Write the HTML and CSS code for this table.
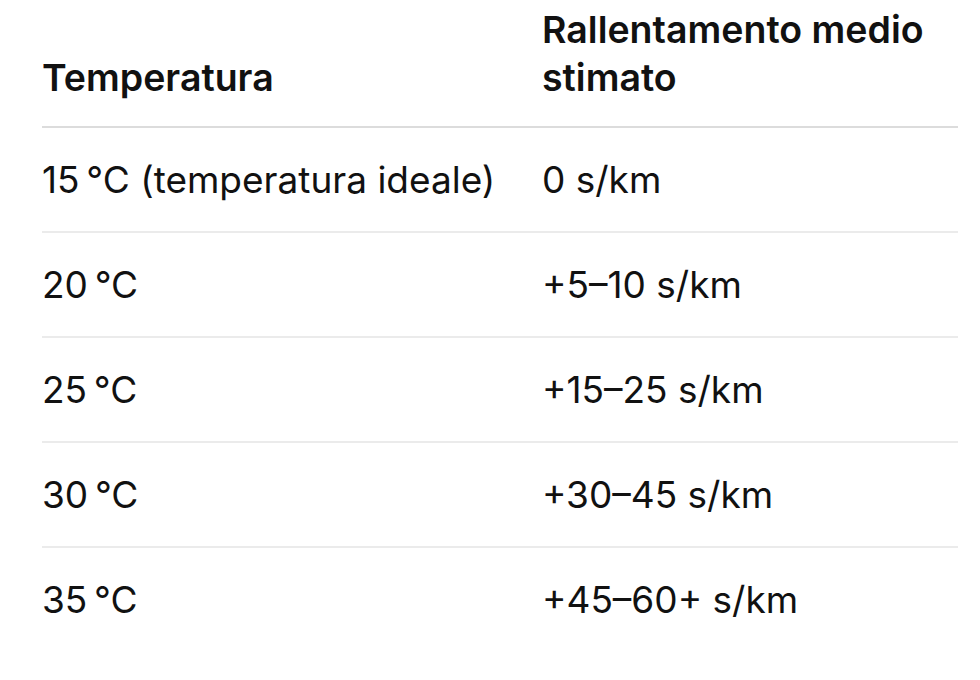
FILE: index.html
```html
<!DOCTYPE html>
<html lang="it">
<head>
<meta charset="utf-8">
<link rel="stylesheet" href="styles.css">
</head>
<body>
<div class="page">
<table class="tbl">
  <thead>
    <tr>
      <th class="c1">Temperatura</th>
      <th class="c2">Rallentamento medio stimato</th>
    </tr>
  </thead>
  <tbody>
    <tr><td>15&#8239;°C (temperatura ideale)</td><td>0 s/km</td></tr>
    <tr><td>20&#8239;°C</td><td>+5–10 s/km</td></tr>
    <tr><td>25&#8239;°C</td><td>+15–25 s/km</td></tr>
    <tr><td>30&#8239;°C</td><td>+30–45 s/km</td></tr>
    <tr><td>35&#8239;°C</td><td>+45–60+ s/km</td></tr>
  </tbody>
</table>
</div>
</body>
</html>
```
FILE: styles.css
```css
html, body {
  margin: 0;
  padding: 0;
  background: #ffffff;
}
.page {
  padding: 6px 22px 0 42px;
}
.tbl {
  width: 916px;
  border-collapse: collapse;
  font-family: Inter, "Liberation Sans", sans-serif;
  color: #111111;
  font-size: 37px;
}
.tbl th {
  text-align: left;
  font-weight: 600;
  font-size: 37.5px;
  vertical-align: bottom;
  line-height: 48px;
  padding: 0 0 24px 0;
  border-bottom: 2px solid #dcdcdc;
}
.tbl .c1 { width: 500px; }
.tbl td {
  height: 103px;
  padding: 0;
  vertical-align: middle;
  border-bottom: 2px solid #ebebeb;
}
.tbl tbody tr:last-child td {
  border-bottom: none;
}
```
